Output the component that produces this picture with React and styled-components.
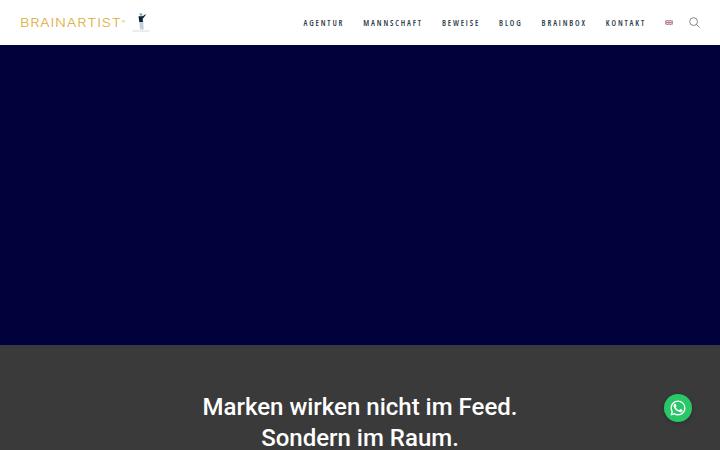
import React from 'react'
import styled, { createGlobalStyle } from 'styled-components'

const GlobalStyle = createGlobalStyle`
  html, body {
    margin: 0;
    padding: 0;
    height: 100%;
    overflow: hidden;
    background: #3a3a3a;
  }
  body {
    font-family: "Roboto", "Liberation Sans", sans-serif;
  }
`

const Page = styled.div`
  position: relative;
  width: 720px;
  height: 450px;
  overflow: hidden;
  display: flex;
  flex-direction: column;
`

const Header = styled.header`
  height: 45px;
  flex: none;
  background: #fff;
  display: flex;
  align-items: center;
  justify-content: space-between;
  padding: 0 20px;
`

const Logo = styled.a`
  display: flex;
  align-items: center;
  gap: 6px;
`

const Wordmark = styled.span`
  display: block;
  width: 106px;
  font-family: "Inter", sans-serif;
  font-size: 11px;
  font-weight: 300;
  line-height: 12px;
  letter-spacing: 0.6px;
  color: #e0a935;
  white-space: nowrap;
  transform: scaleX(1.31);
  transform-origin: left center;
`

const Registered = styled.sup`
  font-size: 4px;
  line-height: 0;
  letter-spacing: 0;
  vertical-align: 4px;
`

const Nav = styled.nav`
  display: flex;
  align-items: center;
  gap: 20px;
`

const NavLink = styled.a`
  font-family: "Open Sans", "Roboto", sans-serif;
  font-stretch: 75%;
  font-size: 8px;
  line-height: 10px;
  font-weight: 600;
  letter-spacing: 1.85px;
  margin-right: -1px;
  color: #2c3a4a;
  text-transform: uppercase;
  white-space: nowrap;
`

const Tools = styled.div`
  display: flex;
  align-items: center;
  gap: 16px;
`

const Hero = styled.section`
  height: 300px;
  flex: none;
  background: #01013c;
`

const Statement = styled.section`
  flex: 1;
  background: #3a3a3a;
  padding-top: 47px;
  text-align: center;
`

const Headline = styled.h1`
  margin: 0;
  font-family: "Roboto", sans-serif;
  font-size: 24px;
  line-height: 31px;
  font-weight: 500;
  color: #fff;
`

const ChatButton = styled.a`
  position: absolute;
  left: 664px;
  top: 394px;
  width: 28px;
  height: 28px;
  border-radius: 50%;
  background: #2ac768;
  display: flex;
  align-items: center;
  justify-content: center;
  box-shadow: 0 1px 4px rgba(0, 0, 0, 0.25);
`

const Golfer = () => (
  <svg width="18" height="20" viewBox="0 0 18 20">
    <path d="M7 .8l3-.6.6 1.8-1.8 1z" fill="#7fa8bd" />
    <path d="M6.5 3.2H11l-.3 4.8.6 1H7.3z" fill="#0d2238" />
    <path d="M10 3.8l3.5-2.6.4.5L11 5.4z" fill="#0d2238" />
    <path d="M7.3 9h4l.4 7.5H8z" fill="#c5d0d6" />
    <path d="M0.5 18h17" stroke="#b9c2c6" strokeWidth="0.6" />
  </svg>
)

const FlagUk = () => (
  <svg width="8" height="5" viewBox="0 0 8 5">
    <rect width="8" height="5" fill="#7d86b4" />
    <path d="M0 0l8 5M8 0L0 5" stroke="#f4d6dc" strokeWidth="1" />
    <path d="M4 0v5M0 2.5h8" stroke="#ece6e8" strokeWidth="1.6" />
    <path d="M4 0v5M0 2.5h8" stroke="#dc6d80" strokeWidth="0.9" />
  </svg>
)

const SearchIcon = () => (
  <svg width="11" height="11" viewBox="0 0 11 11" fill="none" stroke="#5f6b73" strokeWidth="0.8">
    <circle cx="4.6" cy="4.6" r="3.9" />
    <path d="M7.4 7.4l3.2 3.2" />
  </svg>
)

const WhatsappIcon = () => (
  <svg width="18" height="18" viewBox="0 0 24 24" fill="#fff">
    <path d="M17.47 14.38c-.3-.15-1.76-.87-2.03-.97-.27-.1-.47-.15-.67.15-.2.3-.77.97-.94 1.16-.17.2-.35.22-.65.07-.3-.15-1.26-.46-2.39-1.48-.88-.79-1.48-1.76-1.65-2.06-.17-.3-.02-.46.13-.61.13-.13.3-.35.45-.52.15-.17.2-.3.3-.5.1-.2.05-.37-.03-.52-.07-.15-.67-1.61-.91-2.21-.24-.58-.49-.5-.67-.51h-.57c-.2 0-.52.07-.79.37-.27.3-1.04 1.02-1.04 2.48s1.07 2.88 1.21 3.07c.15.2 2.1 3.2 5.08 4.49.71.3 1.26.49 1.7.63.71.23 1.36.19 1.87.12.57-.09 1.76-.72 2.01-1.41.25-.7.25-1.29.17-1.41-.07-.13-.27-.2-.57-.35z" />
    <path d="M12.05 2C6.55 2 2.08 6.46 2.08 11.96c0 1.76.46 3.47 1.33 4.98L2 22l5.25-1.38a9.9 9.9 0 0 0 4.8 1.22c5.5 0 9.97-4.46 9.97-9.96A9.96 9.96 0 0 0 12.05 2zm0 18.15a8.2 8.2 0 0 1-4.19-1.15l-.3-.18-3.12.82.83-3.04-.2-.31a8.2 8.2 0 0 1-1.26-4.33c0-4.55 3.7-8.25 8.25-8.25a8.25 8.25 0 0 1 8.24 8.25c0 4.54-3.7 8.19-8.25 8.19z" />
  </svg>
)

const links = ['Agentur', 'Mannschaft', 'Beweise', 'Blog', 'Brainbox', 'Kontakt']

const App = () => {
  return (
    <Page>
      <GlobalStyle />
      <Header>
        <Logo>
          <Wordmark>
            BRAINARTIST<Registered>®</Registered>
          </Wordmark>
          <Golfer />
        </Logo>
        <Nav>
          {links.map((l) => (
            <NavLink key={l}>{l}</NavLink>
          ))}
          <Tools>
            <FlagUk />
            <SearchIcon />
          </Tools>
        </Nav>
      </Header>
      <Hero />
      <Statement>
        <Headline>
          Marken wirken nicht im Feed.
          <br />
          Sondern im Raum.
        </Headline>
      </Statement>
      <ChatButton>
        <WhatsappIcon />
      </ChatButton>
    </Page>
  )
}

export default App
